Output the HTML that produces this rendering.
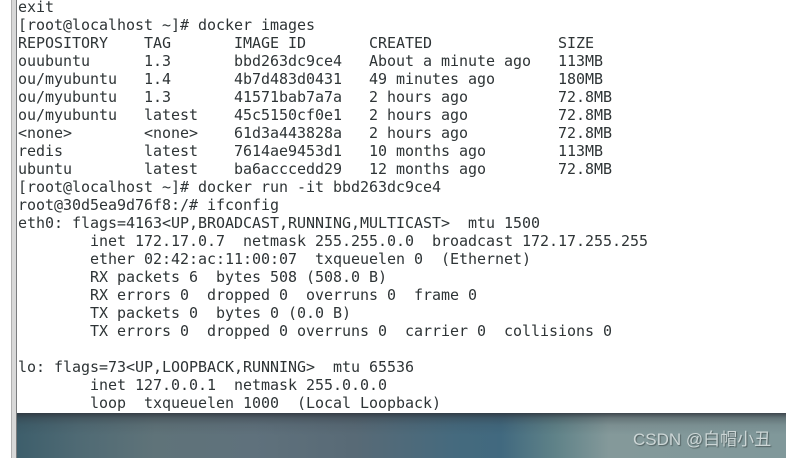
<!DOCTYPE html>
<html>
<head>
<meta charset="utf-8">
<style>
html,body{margin:0;padding:0;width:786px;height:458px;overflow:hidden;background:#fff}
#wrap{position:relative;width:786px;height:458px;overflow:hidden;background:#fff}
#bar{position:absolute;left:11px;top:0;width:6px;height:458px;background:#d8d8d8;border-right:1px solid #7a7c7e;box-sizing:border-box}
#bar2{position:absolute;left:11px;top:0;width:1px;height:458px;background:#b0b0b0}
#term{position:absolute;left:18px;top:-2px;margin:0;font-family:"DejaVu Sans Mono","Liberation Mono",monospace;font-size:15px;line-height:18px;color:#2e3436;letter-spacing:-0.03px;white-space:pre;filter:blur(0.3px)}
#desk{position:absolute;left:16px;top:413px;width:770px;height:45px;background:
linear-gradient(180deg,rgba(45,50,58,.8) 0,rgba(45,50,58,.35) 5px,rgba(45,50,58,.1) 12px,rgba(45,50,58,0) 22px),
linear-gradient(90deg,#3d5e6b 0,#4f6a74 8%,#5f7379 18%,#5f717c 31%,#586a76 44%,#456a7e 57%,#41697f 63%,#5f8288 70%,#84999a 77%,#80989a 100%)}
#wm{position:absolute;left:633px;top:430px;font-family:"Liberation Sans","Noto Sans CJK SC",sans-serif;font-size:17px;line-height:20px;color:#ccd6d6;text-shadow:1px 1px 1px rgba(40,50,50,.55);white-space:pre;filter:blur(0.3px)}
</style>
</head>
<body>
<div id="wrap">
<pre id="term">exit
[root@localhost ~]# docker images
REPOSITORY    TAG       IMAGE ID       CREATED              SIZE
ouubuntu      1.3       bbd263dc9ce4   About a minute ago   113MB
ou/myubuntu   1.4       4b7d483d0431   49 minutes ago       180MB
ou/myubuntu   1.3       41571bab7a7a   2 hours ago          72.8MB
ou/myubuntu   latest    45c5150cf0e1   2 hours ago          72.8MB
&lt;none&gt;        &lt;none&gt;    61d3a443828a   2 hours ago          72.8MB
redis         latest    7614ae9453d1   10 months ago        113MB
ubuntu        latest    ba6acccedd29   12 months ago        72.8MB
[root@localhost ~]# docker run -it bbd263dc9ce4
root@30d5ea9d76f8:/# ifconfig
eth0: flags=4163&lt;UP,BROADCAST,RUNNING,MULTICAST&gt;  mtu 1500
        inet 172.17.0.7  netmask 255.255.0.0  broadcast 172.17.255.255
        ether 02:42:ac:11:00:07  txqueuelen 0  (Ethernet)
        RX packets 6  bytes 508 (508.0 B)
        RX errors 0  dropped 0  overruns 0  frame 0
        TX packets 0  bytes 0 (0.0 B)
        TX errors 0  dropped 0 overruns 0  carrier 0  collisions 0

lo: flags=73&lt;UP,LOOPBACK,RUNNING&gt;  mtu 65536
        inet 127.0.0.1  netmask 255.0.0.0
        loop  txqueuelen 1000  (Local Loopback)</pre>
<div id="desk"></div>
<div id="bar"></div>
<div id="bar2"></div>
<div id="wm">CSDN @白帽小丑</div>
</div>
</body>
</html>
